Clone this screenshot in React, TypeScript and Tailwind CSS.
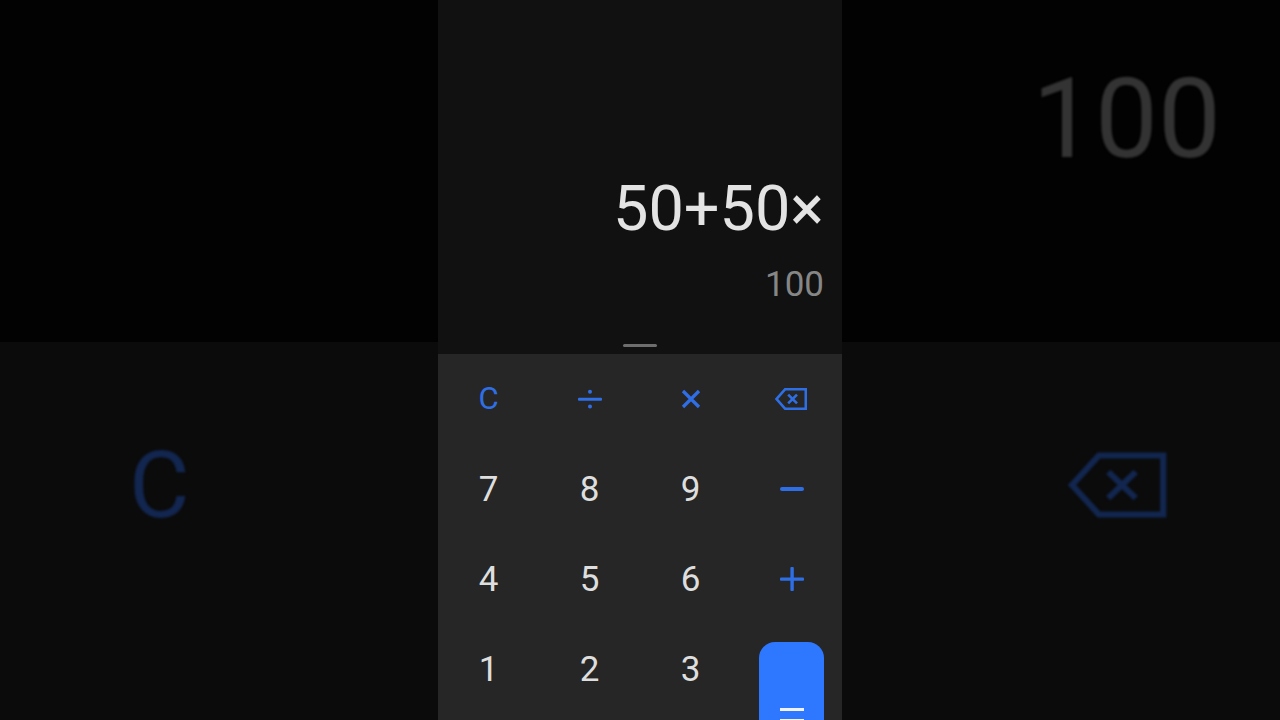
const font = { fontFamily: "Roboto, sans-serif" };

function BackspaceIcon({ className, weight = "2.6" }: { className: string; weight?: string }) {
  return (
    <svg viewBox="0 0 32 22" preserveAspectRatio="none" fill="none" stroke="currentColor" strokeWidth={weight} className={className}>
      <path d="M30.8 1.2H10.2L1.6 11l8.6 9.8h20.6z" />
      <path d="M13.2 6.6l8.8 8.8M22 6.6l-8.8 8.8" />
    </svg>
  );
}

function DivideIcon() {
  return (
    <svg viewBox="0 0 24 20" className="h-5 w-6 fill-[#2f6fe6]">
      <rect x="0" y="8.8" width="24" height="3" rx="1" />
      <circle cx="12" cy="2.8" r="2" />
      <circle cx="12" cy="17.6" r="2" />
    </svg>
  );
}

function TimesIcon() {
  return (
    <svg viewBox="0 0 20 20" fill="none" stroke="#2f6fe6" strokeWidth="3.2" className="h-5 w-5">
      <path d="M2 2l16 16M18 2L2 18" />
    </svg>
  );
}

function MinusIcon() {
  return <div className="h-1 w-6 rounded-sm bg-[#2f6fe6]" />;
}

function PlusIcon() {
  return (
    <svg viewBox="0 0 24 24" className="h-6 w-6 fill-[#2f6fe6]">
      <rect x="0" y="10.4" width="24" height="3.4" rx="1" />
      <rect x="10.4" y="0" width="3.4" height="24" rx="1" />
    </svg>
  );
}

function Digit({ value }: { value: string }) {
  return <div className="flex h-[90px] items-center justify-center pt-[2px] text-[35px] text-[#dedede]">{value}</div>;
}

function Cell({ children }: { children: React.ReactNode }) {
  return <div className="flex h-[90px] items-center justify-center text-[#2f6fe6]">{children}</div>;
}

export default function App() {
  return (
    <div className="flex h-[720px] w-[1280px] overflow-hidden bg-black" style={font}>
      {/* blurred left side */}
      <div className="flex w-[438px] flex-col">
        <div className="h-[342px] bg-[#020202]" />
        <div className="flex-1 bg-[#0b0b0b] pl-[129px] pt-[92px]">
          <div className="text-[93px] leading-[104px] text-[#12264f] blur-[1px]">C</div>
        </div>
      </div>

      {/* phone */}
      <div className="flex w-[404px] flex-col">
        <div className="flex h-[354px] flex-col items-end bg-[#111111] pr-[18px] pt-[171px]">
          <div className="text-[63px] leading-[76px] text-[#e3e3e3]">50+50×</div>
          <div className="mt-[18px] text-[35px] leading-10 text-[#868686]">100</div>
          <div className="mr-[167px] mt-[39px] h-[3px] w-[34px] rounded-sm bg-[#6e6e6e]" />
        </div>
        <div className="grid flex-1 grid-cols-4 content-start bg-[#262626]">
          <Cell>
            <span className="pt-[1px] text-[31px]">C</span>
          </Cell>
          <Cell>
            <DivideIcon />
          </Cell>
          <Cell>
            <TimesIcon />
          </Cell>
          <Cell>
            <div className="mr-[2px]">
              <BackspaceIcon className="h-[22px] w-8" />
            </div>
          </Cell>
          <Digit value="7" />
          <Digit value="8" />
          <Digit value="9" />
          <Cell>
            <MinusIcon />
          </Cell>
          <Digit value="4" />
          <Digit value="5" />
          <Digit value="6" />
          <Cell>
            <PlusIcon />
          </Cell>
          <Digit value="1" />
          <Digit value="2" />
          <Digit value="3" />
          <div className="flex h-[90px] justify-center pt-[18px]">
            <div className="flex h-[120px] w-[65px] flex-col items-center gap-2 rounded-t-2xl bg-[#2e77ff] pt-[66px]">
              <div className="h-[3px] w-6 bg-[#f2f2f2]" />
              <div className="h-[3px] w-6 bg-[#f2f2f2]" />
            </div>
          </div>
        </div>
      </div>

      {/* blurred right side */}
      <div className="flex w-[438px] flex-col">
        <div className="flex h-[342px] items-start justify-end bg-[#020202] pr-[59px] pt-[54px]">
          <div className="text-[112px] leading-[130px] text-[#333333] blur-[1px]">100</div>
        </div>
        <div className="flex-1 bg-[#0b0b0b] pl-[225px] pt-[110px]">
          <BackspaceIcon className="h-[66px] w-[100px] text-[#12264f] blur-[1px]" weight="2" />
        </div>
      </div>
    </div>
  );
}
